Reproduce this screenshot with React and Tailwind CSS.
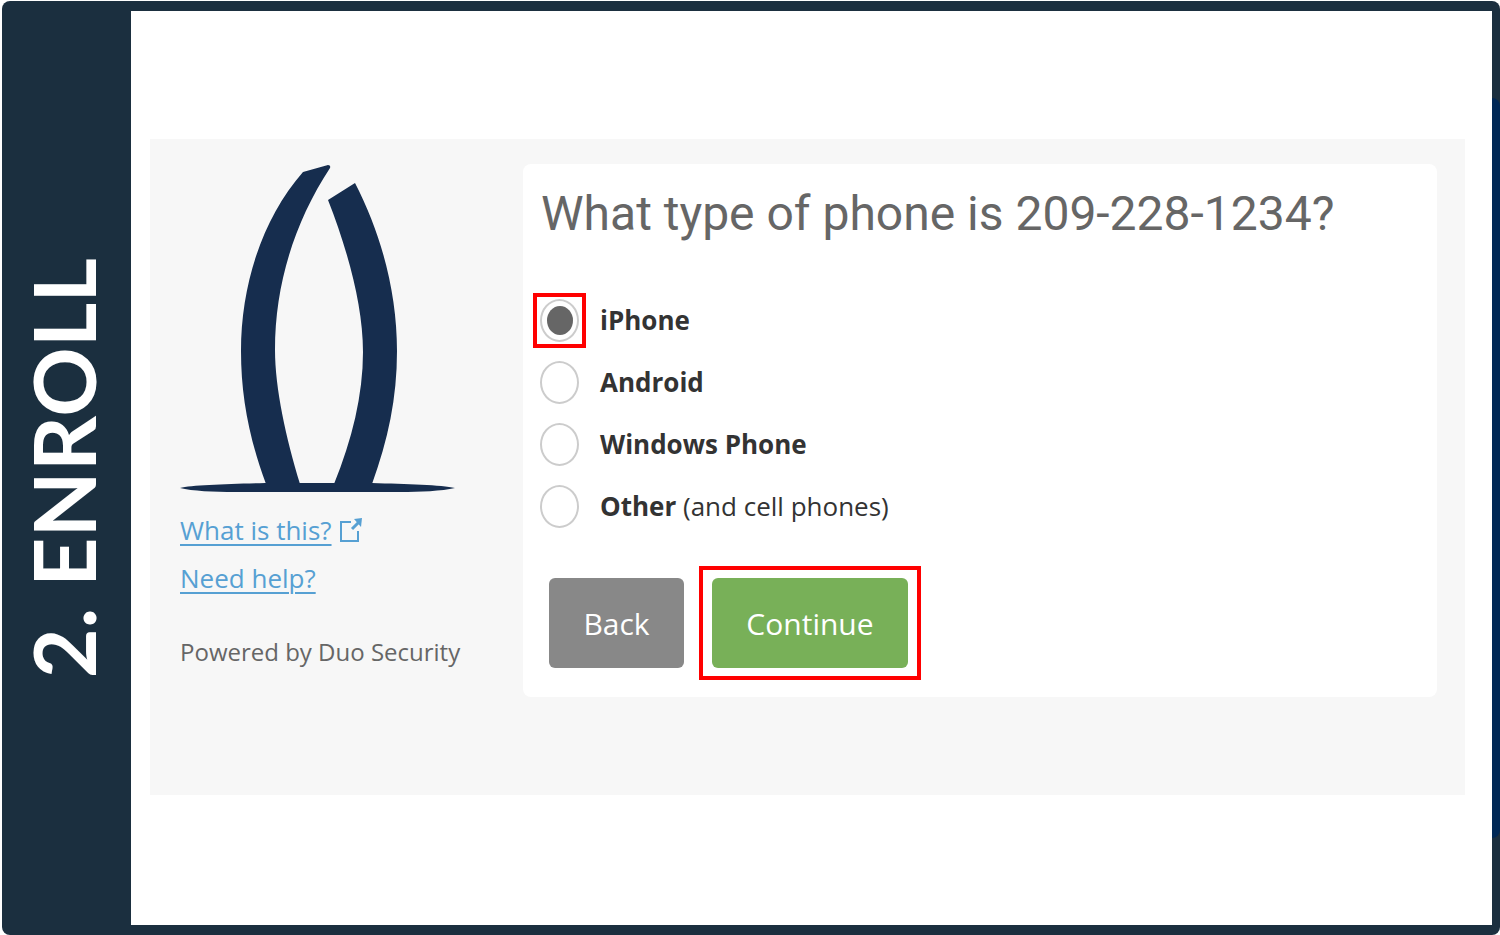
import React, { useState } from "react";

const phoneTypes = [
  { id: "iphone", label: "iPhone" },
  { id: "android", label: "Android" },
  { id: "windows", label: "Windows Phone" },
  { id: "other", label: "Other", note: "(and cell phones)" },
];

const TowerLogo = () => (
  <svg
    viewBox="0 0 275 328"
    className="w-[275px] h-[328px]"
    fill="#162d4e"
    role="img"
    aria-label="Campus logo"
  >
    <path d="M123 8 L148 1 Q151 1 150 4 C114 59 95 121 95 186 C95 224 106 274 120 320 L86 320 C69 274 61 232 61 187 C61 121 82 55 123 8 Z" />
    <path d="M148 36 L175 19 C202 71 217 130 217 187 C217 234 208 276 192 320 L154 320 C172 276 183 231 183 188 C183 142 168 87 148 36 Z" />
    <path d="M0 324 C12 321 48 320 85 319 L192 319 C226 320 262 321 275 324 C262 327 240 328 220 328 L55 328 C34 328 12 327 0 324 Z" />
  </svg>
);

const ExternalIcon = () => (
  <svg viewBox="0 0 22 24" className="w-[22px] h-6" fill="none" aria-hidden="true">
    <path d="M11 4 H1 V23 H18 V13" stroke="#56a0d3" strokeWidth="2" />
    <path d="M12 11 L19 4" stroke="#56a0d3" strokeWidth="3" />
    <path d="M14 1 L22 0 L21 9 Z" fill="#56a0d3" />
  </svg>
);

const PhoneOption = ({ option, checked, onChange }) => (
  <div className="flex items-center gap-[14px] h-[62px]">
    {/* Selected option gets the red callout */}
    <span
      className={`flex items-center justify-center w-[53px] h-[55px] border-4 ${
        checked ? "border-[#ff0000]" : "border-transparent"
      }`}
    >
      <input
        type="radio"
        name="phoneType"
        id={option.id}
        checked={checked}
        onChange={onChange}
        className="appearance-none shrink-0 flex items-center justify-center w-[39px] h-[43px] rounded-[50%] border-2 border-[#cccccc] bg-white checked:before:block checked:before:w-[26px] checked:before:h-[29px] checked:before:rounded-[50%] checked:before:bg-[#666666]"
      />
    </span>
    <label htmlFor={option.id} className="text-[26px] text-[#333333]">
      <span className="font-bold">{option.label}</span>
      {option.note && ` ${option.note}`}
    </label>
  </div>
);

const App = () => {
  const [selected, setSelected] = useState("iphone");

  return (
    <div className="min-h-screen flex bg-white pl-[2px] pt-px font-['Open_Sans','Noto_Sans',sans-serif]">
      <div className="relative flex flex-1 rounded-lg bg-[#1b2f3f] overflow-hidden pr-2">
        {/* Step banner */}
        <aside className="w-[129px] shrink-0 flex items-center justify-center pr-2">
          <h2 className="[writing-mode:vertical-rl] rotate-180 whitespace-nowrap text-[86px] leading-[96px] font-bold text-white font-['Lato',sans-serif]">
            2. ENROLL
          </h2>
        </aside>

        <main className="flex-1 my-[10px] bg-white flex flex-col justify-center pl-[19px] pr-[27px] pb-[2px]">
          <div className="flex items-start gap-[68px] bg-[#f7f7f7] pl-[30px] pr-7 pt-[25px] pb-[98px]">
            <div className="w-[275px] shrink-0 whitespace-nowrap">
              <TowerLogo />
              <div className="flex items-center gap-2 h-12 mt-[14px] text-[26px] text-[#56a0d3]">
                <a href="#what" className="underline underline-offset-4 decoration-2">
                  What is this?
                </a>
                <ExternalIcon />
              </div>
              <div className="flex items-center h-12 text-[26px] text-[#56a0d3]">
                <a href="#help" className="underline underline-offset-4 decoration-2">
                  Need help?
                </a>
              </div>
              <p className="mt-[34px] text-2xl text-[#666666]">Powered by Duo Security</p>
            </div>

            <form
              className="flex-1 rounded-lg bg-white pl-[10px] pr-4 pt-4 pb-[17px]"
              onSubmit={(e) => e.preventDefault()}
            >
              <h1 className="pl-2 text-[48px] leading-[68px] text-[#666666] font-normal font-['Roboto',sans-serif]">
                What type of phone is 209-228-1234?
              </h1>
              <div className="mt-[41px]">
                {phoneTypes.map((option) => (
                  <PhoneOption
                    key={option.id}
                    option={option}
                    checked={selected === option.id}
                    onChange={() => setSelected(option.id)}
                  />
                ))}
              </div>
              <div className="flex items-center gap-[15px] mt-[29px] pl-4">
                <button
                  type="button"
                  className="w-[135px] h-[90px] rounded-md bg-[#888888] text-[30px] text-white"
                >
                  Back
                </button>
                <div className="border-4 border-[#ff0000] px-[9px] py-2">
                  <button
                    type="submit"
                    className="block w-[196px] h-[90px] rounded-md bg-[#78b058] text-[30px] text-white"
                  >
                    Continue
                  </button>
                </div>
              </div>
            </form>
          </div>
        </main>

        {/* Navy strip along the right edge */}
        <div className="absolute right-0 inset-y-[97px] w-2 rounded-r-lg bg-[#002856]" />
      </div>
    </div>
  );
};

export default App;
